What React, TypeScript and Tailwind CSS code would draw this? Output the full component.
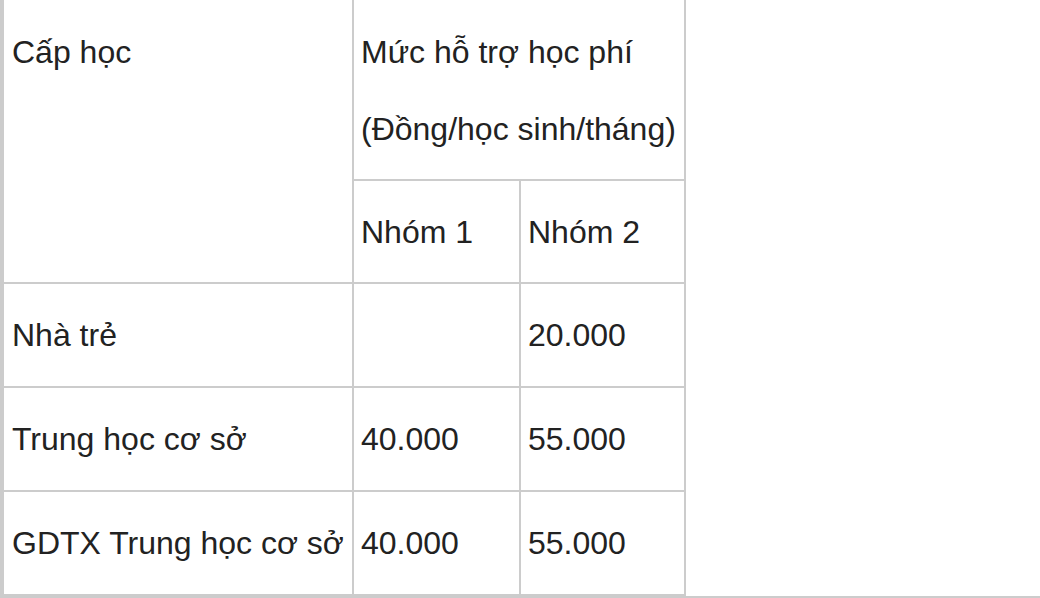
const rows = [
  { level: "Nhà trẻ", g1: "", g2: "20.000" },
  { level: "Trung học cơ sở", g1: "40.000", g2: "55.000" },
  { level: "GDTX Trung học cơ sở", g1: "40.000", g2: "55.000" },
];

export default function App() {
  return (
    <div className="h-[598px] w-[1040px] overflow-hidden border-b-2 border-[#cccccc] bg-white font-['Liberation_Sans',Arial,sans-serif] text-[32px] text-[#222222]">
      <div className="inline-grid grid-cols-[348px_165px_163px] grid-rows-[179px_101px_102px_102px_102px] gap-[2px] bg-[#cccccc] pb-[2px] pl-[4px] pr-[2px]">
        <div className="row-span-2 bg-white pl-2 pt-[28px] leading-[48px]">Cấp học</div>
        <div className="col-span-2 bg-white pl-[7px] pt-[28px] leading-[48px] whitespace-nowrap">
          <p>Mức hỗ trợ học phí</p>
          <p className="mt-[29px]">(Đồng/học sinh/tháng)</p>
        </div>
        <div className="flex items-center bg-white pl-[7px]">Nhóm 1</div>
        <div className="flex items-center bg-white pl-[7px]">Nhóm 2</div>

        {rows.map((r) => (
          <div key={r.level} className="contents">
            <div className="flex items-center bg-white pl-2 whitespace-nowrap">{r.level}</div>
            <div className="flex items-center bg-white pl-[7px]">{r.g1}</div>
            <div className="flex items-center bg-white pl-[7px]">{r.g2}</div>
          </div>
        ))}
      </div>
    </div>
  );
}
